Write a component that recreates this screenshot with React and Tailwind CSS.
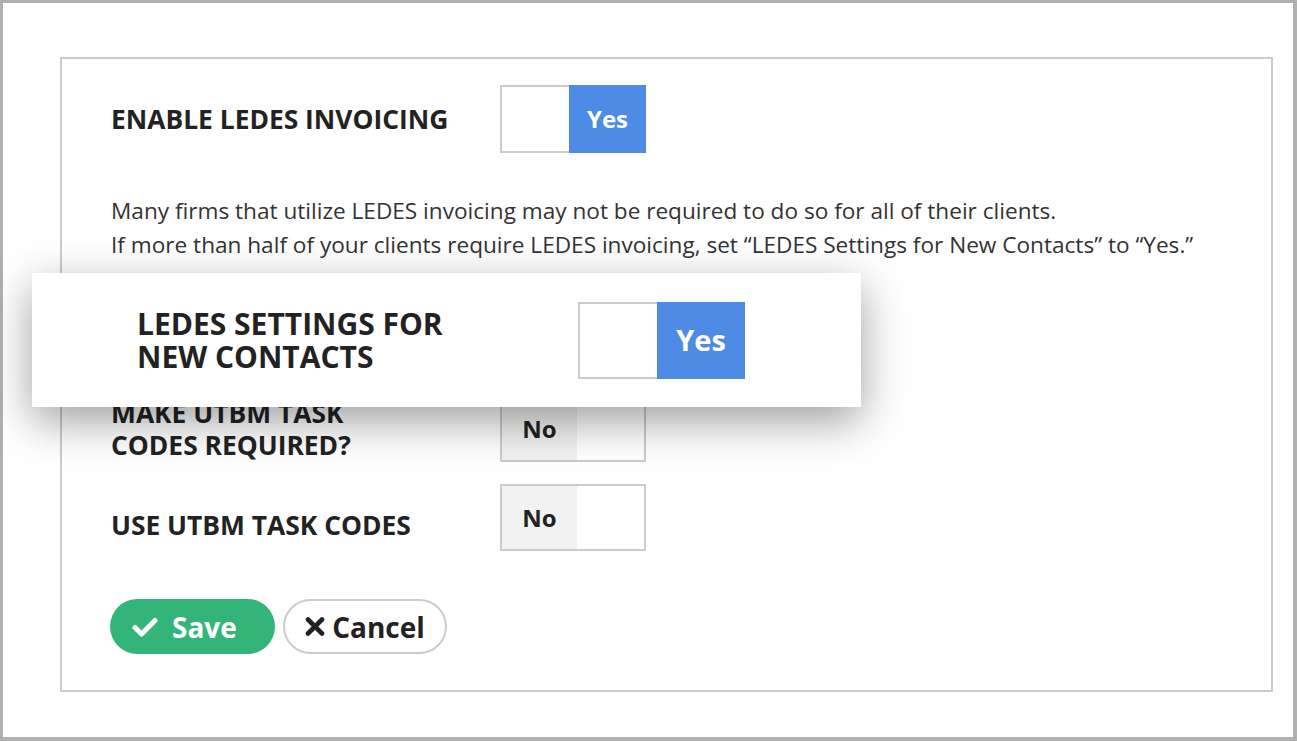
import React from 'react';

const font = { fontFamily: '"Open Sans", "Liberation Sans", sans-serif' };

function YesToggle({ big }) {
  return (
    <div className={`flex ${big ? 'h-[77px]' : 'h-[68px]'}`}>
      <div className={`${big ? 'w-[79px]' : 'w-[69px]'} border-2 border-r-0 border-[#cccccc] bg-white`} />
      <div className={`${big ? 'w-[88px] text-[29px]' : 'w-[77px] text-[24px]'} bg-[#4d8be4] text-white font-bold flex items-center justify-center`}>Yes</div>
    </div>
  );
}

function NoToggle() {
  return (
    <div className="flex h-[67px] w-[146px] border-2 border-[#cccccc] bg-white">
      <div className="w-[75px] bg-[#f2f2f2] flex items-center justify-center text-[24px] font-bold text-[#222]">No</div>
      <div className="flex-1" />
    </div>
  );
}

export default function App() {
  return (
    <div style={font} className="relative w-[1297px] h-[741px] bg-white border-t-[3px] border-l-[3px] border-r-4 border-b-4 border-[#b0b0b0] pt-[54px] pl-[57px] text-[#222]">
      <div className="w-[1213px] h-[635px] border-2 border-[#cccccc] pl-[49px] pt-[26px]">
        <div className="flex items-center">
          <div className="w-[389px] text-[26.4px] font-bold leading-[32px]">ENABLE LEDES INVOICING</div>
          <YesToggle />
        </div>
        <p className="mt-[41px] text-[22.6px] leading-[34px] text-[#333]">
          Many firms that utilize LEDES invoicing may not be required to do so for all of their clients.<br />
          If more than half of your clients require LEDES invoicing, set “LEDES Settings for New Contacts” to “Yes.”
        </p>
        <div className="flex items-center mt-[133px]">
          <div className="w-[389px] text-[26.4px] font-bold leading-[32px]">MAKE UTBM TASK<br />CODES REQUIRED?</div>
          <NoToggle />
        </div>
        <div className="flex items-center mt-[22px]">
          <div className="w-[389px] text-[26.4px] font-bold leading-[32px] pt-[14px]">USE UTBM TASK CODES</div>
          <NoToggle />
        </div>
        <div className="flex gap-[8px] mt-[48px] -ml-[1px]">
          <button className="h-[55px] w-[165px] rounded-full bg-[#33b579] text-white text-[28px] font-bold flex items-center justify-start pl-[22px] gap-[14px]">
            <svg width="26" height="20" viewBox="0 0 26 20" fill="none">
              <path d="M3 10.5 L9.5 17 L23 3.5" stroke="currentColor" strokeWidth="5" strokeLinecap="round" strokeLinejoin="round" />
            </svg>
            <span>Save</span>
          </button>
          <button className="h-[55px] w-[164px] rounded-full border-2 border-[#cccccc] bg-white text-[#222] text-[28px] font-bold flex items-center justify-center gap-[7px]">
            <svg width="20" height="19" viewBox="0 0 20 19" fill="none">
              <path d="M3 2.5 L17 16.5 M17 2.5 L3 16.5" stroke="currentColor" strokeWidth="4.6" strokeLinecap="round" />
            </svg>
            <span>Cancel</span>
          </button>
        </div>
      </div>
      <div className="absolute left-[29px] top-[270px] w-[829px] h-[134px] bg-white shadow-[0_14px_42px_rgba(0,0,0,0.38)] flex items-center pl-[105px]">
        <div className="w-[441px] text-[30px] font-bold leading-[33px]">LEDES SETTINGS FOR<br />NEW CONTACTS</div>
        <YesToggle big />
      </div>
    </div>
  );
}
